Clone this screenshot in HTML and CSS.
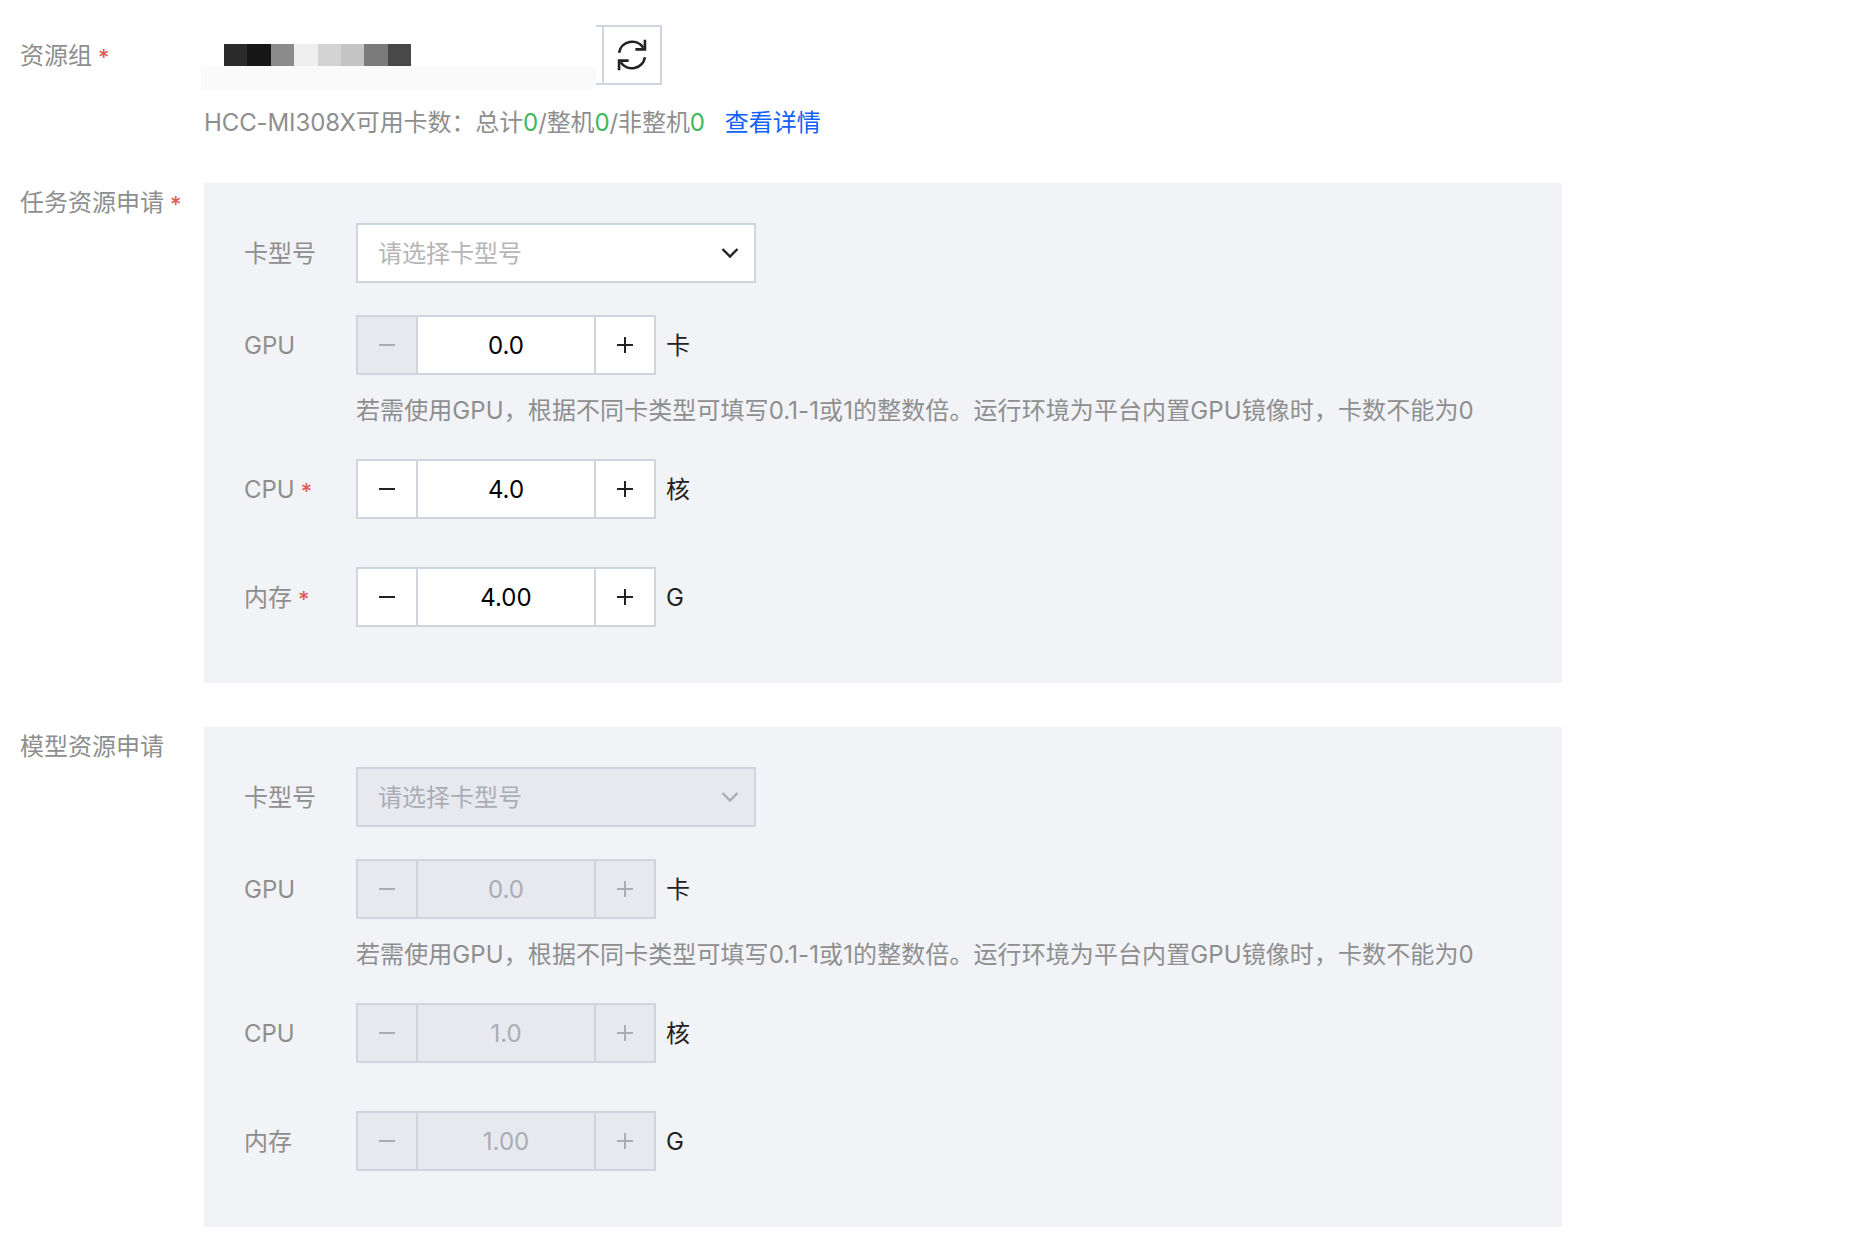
FILE: index.html
```html
<!DOCTYPE html>
<html lang="zh-CN">
<head>
<meta charset="utf-8">
<title>资源申请</title>
<link rel="stylesheet" href="styles.css">
</head>
<body>
<form class="form">
  <div class="group group-top">
    <div class="label">资源组<span class="req">*</span></div>
    <div class="content">
      <div class="picker">
        <div class="masked">
          <div class="pixels">
            <i class="px p1"></i><i class="px p2"></i><i class="px p3"></i><i class="px p4"></i><i class="px p5"></i><i class="px p6"></i><i class="px p7"></i><i class="px p8"></i>
          </div>
          <div class="haze"></div>
        </div>
        <button type="button" class="refresh" aria-label="刷新">
          <span class="refresh-in">
            <svg viewBox="0 0 32 32" width="36" height="36" fill="none" stroke="#222" stroke-width="2.3">
              <path d="M4.500 14A11.800 11.800 0 0 1 26 9.500"/>
              <path d="M27.500 18A11.800 11.800 0 0 1 6 22.500"/>
              <path d="M27.500 2.500V11H19"/>
              <path d="M4.500 29.500V21H13"/>
            </svg>
          </span>
        </button>
      </div>
      <p class="stat">HCC-MI308X可用卡数：总计<b>0</b>/整机<b>0</b>/非整机<b>0</b><a class="link" href="#">查看详情</a></p>
    </div>
  </div>

  <div class="group group-task">
    <div class="label label-panel">任务资源申请<span class="req">*</span></div>
    <div class="panel">
      <div class="row">
        <div class="sub cjk">卡型号</div>
        <div class="select"><span class="cjk">请选择卡型号</span>
          <svg class="chev" viewBox="0 0 18 12" width="18" height="12" fill="none" stroke="#222" stroke-width="2.4"><path d="M1.500 2l7.500 7.500L16.500 2"/></svg>
        </div>
      </div>
      <div class="row">
        <div class="sub">GPU</div>
        <div class="stepper">
          <span class="btn off"></span><span class="val">0.0</span><span class="btn plus"></span>
        </div>
        <span class="unit cjk">卡</span>
      </div>
      <p class="hint">若需使用GPU，根据不同卡类型可填写0.1-1或1的整数倍。运行环境为平台内置GPU镜像时，卡数不能为0</p>
      <div class="row row-cpu">
        <div class="sub">CPU<span class="req">*</span></div>
        <div class="stepper">
          <span class="btn"></span><span class="val">4.0</span><span class="btn plus"></span>
        </div>
        <span class="unit cjk">核</span>
      </div>
      <div class="row row-mem">
        <div class="sub cjk">内存<span class="req">*</span></div>
        <div class="stepper">
          <span class="btn"></span><span class="val">4.00</span><span class="btn plus"></span>
        </div>
        <span class="unit">G</span>
      </div>
    </div>
  </div>

  <div class="group group-model">
    <div class="label label-panel">模型资源申请</div>
    <div class="panel">
      <div class="row">
        <div class="sub cjk">卡型号</div>
        <div class="select disabled"><span class="cjk">请选择卡型号</span>
          <svg class="chev" viewBox="0 0 18 12" width="18" height="12" fill="none" stroke="#a9adb5" stroke-width="2.4"><path d="M1.500 2l7.500 7.500L16.500 2"/></svg>
        </div>
      </div>
      <div class="row">
        <div class="sub">GPU</div>
        <div class="stepper disabled">
          <span class="btn off"></span><span class="val">0.0</span><span class="btn off plus"></span>
        </div>
        <span class="unit cjk">卡</span>
      </div>
      <p class="hint">若需使用GPU，根据不同卡类型可填写0.1-1或1的整数倍。运行环境为平台内置GPU镜像时，卡数不能为0</p>
      <div class="row row-cpu">
        <div class="sub">CPU</div>
        <div class="stepper disabled">
          <span class="btn off"></span><span class="val">1.0</span><span class="btn off plus"></span>
        </div>
        <span class="unit cjk">核</span>
      </div>
      <div class="row row-mem">
        <div class="sub cjk">内存</div>
        <div class="stepper disabled">
          <span class="btn off"></span><span class="val">1.00</span><span class="btn off plus"></span>
        </div>
        <span class="unit">G</span>
      </div>
    </div>
  </div>
</form>
</body>
</html>
```

FILE: styles.css
```css
* { box-sizing: border-box; }
html, body { margin: 0; background: #fff; }
body {
  font-family: "Inter", "Noto Sans CJK SC", sans-serif;
  font-size: 24px;
  color: #8e8e8e;
}
.form { padding: 25px 0 0 20px; display: flex; flex-direction: column; }
.group { display: flex; }
.group-task { margin-top: 44px; }
.group-model { margin-top: 44px; }
.label { width: 184px; flex: none; height: 60px; line-height: 62px; white-space: nowrap; }
.label-panel { height: auto; line-height: 36px; padding-top: 2px; }
.sub, .val { padding-top: 1px; }
.cjk { padding-bottom: 4px; }
.req { color: #e05a50; font-size: 22px; font-weight: 500; margin-left: 6px; vertical-align: -1px; }
.content { display: flex; flex-direction: column; }
.picker { display: flex; height: 60px; }
.masked { width: 395px; height: 65px; margin-left: -3px; }
.pixels { display: flex; margin: 19px 0 0 23px; width: 187px; height: 22px; }
.px { flex: 1; display: block; }
.p1 { background: #2a2a2a; }
.p2 { background: #171717; }
.p3 { background: #8b8b8b; }
.p4 { background: #efefef; }
.p5 { background: #d3d3d3; }
.p6 { background: #c4c4c4; }
.p7 { background: #7b7b7b; }
.p8 { background: #484848; }
.haze { height: 24px; background: #fafafa; }
.refresh {
  width: 66px; height: 60px; padding: 0 0 0 6px;
  display: flex;
  background: #fff; border: 2px solid #cfd5de; border-left: 0; border-radius: 0;
}
.refresh-in {
  flex: 1; display: flex; align-items: center; justify-content: center;
  border-left: 2px solid #cfd5de;
}
.stat { margin: 0; padding-top: 20px; height: 54px; line-height: 36px; white-space: nowrap; letter-spacing: -0.1px; }
.stat b { font-weight: 400; color: #3cb85c; }
.link { color: #0f62fe; text-decoration: none; margin-left: 20px; letter-spacing: 0; }
.panel {
  width: 1358px; height: 500px; padding: 40px 0 0 40px;
  background: #f2f3f7;
  display: flex; flex-direction: column;
}
.row { display: flex; align-items: center; height: 60px; margin-bottom: 32px; }
.row-cpu { margin-bottom: 48px; }
.row-mem { margin-bottom: 0; }
.sub { width: 112px; flex: none; white-space: nowrap; }
.select {
  width: 400px; height: 60px; padding: 0 14px 0 20px;
  display: flex; align-items: center; justify-content: space-between;
  background: #fff; border: 2px solid #cfd5de; color: #b5b5b5;
}
.chev { margin-right: 1px; }
.select.disabled { background: #e7e9ee; color: #a9adb5; }
.stepper { display: flex; width: 300px; height: 60px; background: #fff; border: 2px solid #cfd5de; }
.btn {
  width: 58px; flex: none; position: relative; color: #222;
}
.btn::before {
  content: ""; position: absolute; left: 50%; top: 50%;
  width: 16px; height: 2px; margin: -1px 0 0 -8px; background: currentColor;
}
.btn.plus::after {
  content: ""; position: absolute; left: 50%; top: 50%;
  width: 2px; height: 16px; margin: -8px 0 0 -1px; background: currentColor;
}
.btn.off { background: #e7e9ee; color: #a9adb5; }
.val {
  flex: 1; display: flex; align-items: center; justify-content: center;
  color: #000; border-left: 2px solid #cfd5de; border-right: 2px solid #cfd5de;
}
.stepper.disabled { background: #e7e9ee; }
.stepper.disabled .val { color: #a9adb5; }
.unit { color: #222; margin-left: 10px; }
.hint { margin: -14px 0 0 112px; height: 66px; line-height: 36px; white-space: nowrap; letter-spacing: 0.09px; }
```
